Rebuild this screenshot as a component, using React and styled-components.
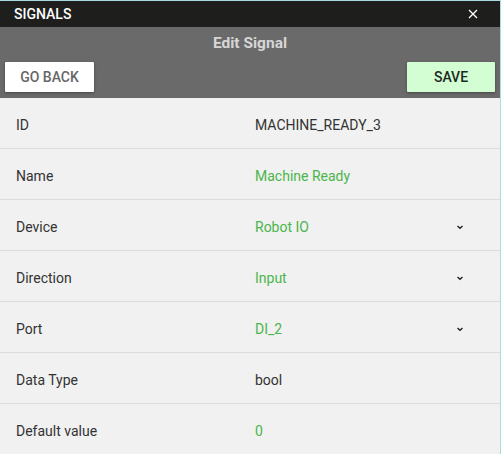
import React from 'react';
import styled, { createGlobalStyle } from 'styled-components';

const Global = createGlobalStyle`
  html, body { margin: 0; padding: 0; background: #f0f1f0; }
  body { font-family: Roboto, "Noto Sans", sans-serif; }
`;

const Window = styled.div`
  width: 501px;
  height: 454px;
  box-sizing: border-box;
  border-top: 1px solid #a9dce0;
  border-right: 1px solid #a9dce0;
  display: flex;
  flex-direction: column;
  overflow: hidden;
  background: #f0f1f0;
`;

const TitleBar = styled.div`
  height: 26px;
  flex-shrink: 0;
  background: #1e1e1d;
  display: flex;
  align-items: center;
  justify-content: space-between;
  padding: 0 22px 0 14px;
  color: #fff;
  font-size: 14px;
  font-weight: 500;
`;

const Close = styled.svg`
  width: 10px;
  height: 10px;
`;

const Header = styled.div`
  height: 71px;
  flex-shrink: 0;
  background: #6a6a6a;
  display: flex;
  flex-direction: column;
  padding: 0 5px 6px;
  box-sizing: border-box;
`;

const Heading = styled.div`
  text-align: center;
  color: #d6d6d6;
  font-size: 15.5px;
  font-weight: 700;
  padding-top: 7px;
  flex: 1;
`;

const Buttons = styled.div`
  display: flex;
  justify-content: space-between;
`;

const Button = styled.button`
  width: ${p => p.$w}px;
  height: 30px;
  border: none;
  border-radius: 1px;
  background: ${p => (p.$primary ? '#d3fdd3' : '#ffffff')};
  color: ${p => (p.$primary ? '#1f2a1f' : '#666')};
  font-family: inherit;
  font-size: 14px;
  font-weight: 500;
  box-shadow: 0 1px 3px rgba(0, 0, 0, 0.35);
  padding: 0;
`;

const Row = styled.div`
  height: 51px;
  flex-shrink: 0;
  box-sizing: border-box;
  display: grid;
  grid-template-columns: 255px 1fr 20px;
  align-items: center;
  padding: 3px 24px 0 0;
  border-bottom: 1px solid #dcdcdc;
  font-size: 14px;
  &:last-child { border-bottom: none; }
`;

const Label = styled.div`
  padding-left: 16px;
  color: #333;
`;

const Value = styled.div`
  color: ${p => (p.$green ? '#4cb54c' : '#333')};
`;

const Chevron = styled.svg`
  width: 8px;
  height: 6px;
`;

const rows = [
  { label: 'ID', value: 'MACHINE_READY_3' },
  { label: 'Name', value: 'Machine Ready', green: true },
  { label: 'Device', value: 'Robot IO', green: true, select: true },
  { label: 'Direction', value: 'Input', green: true, select: true },
  { label: 'Port', value: 'DI_2', green: true, select: true },
  { label: 'Data Type', value: 'bool' },
  { label: 'Default value', value: '0', green: true },
];

export default function App() {
  return (
    <Window>
      <Global />
      <TitleBar>
        <span>SIGNALS</span>
        <Close viewBox="0 0 10 10">
          <path d="M1 1L9 9M9 1L1 9" stroke="#fff" strokeWidth="1.3" />
        </Close>
      </TitleBar>
      <Header>
        <Heading>Edit Signal</Heading>
        <Buttons>
          <Button $w={89}>GO BACK</Button>
          <Button $w={88} $primary>SAVE</Button>
        </Buttons>
      </Header>
      {rows.map(r => (
        <Row key={r.label}>
          <Label>{r.label}</Label>
          <Value $green={r.green}>{r.value}</Value>
          {r.select ? (
            <Chevron viewBox="0 0 8 6">
              <path d="M1.5 2L4 4.2L6.5 2" stroke="#222" strokeWidth="1.4" fill="none" />
            </Chevron>
          ) : <span />}
        </Row>
      ))}
    </Window>
  );
}
